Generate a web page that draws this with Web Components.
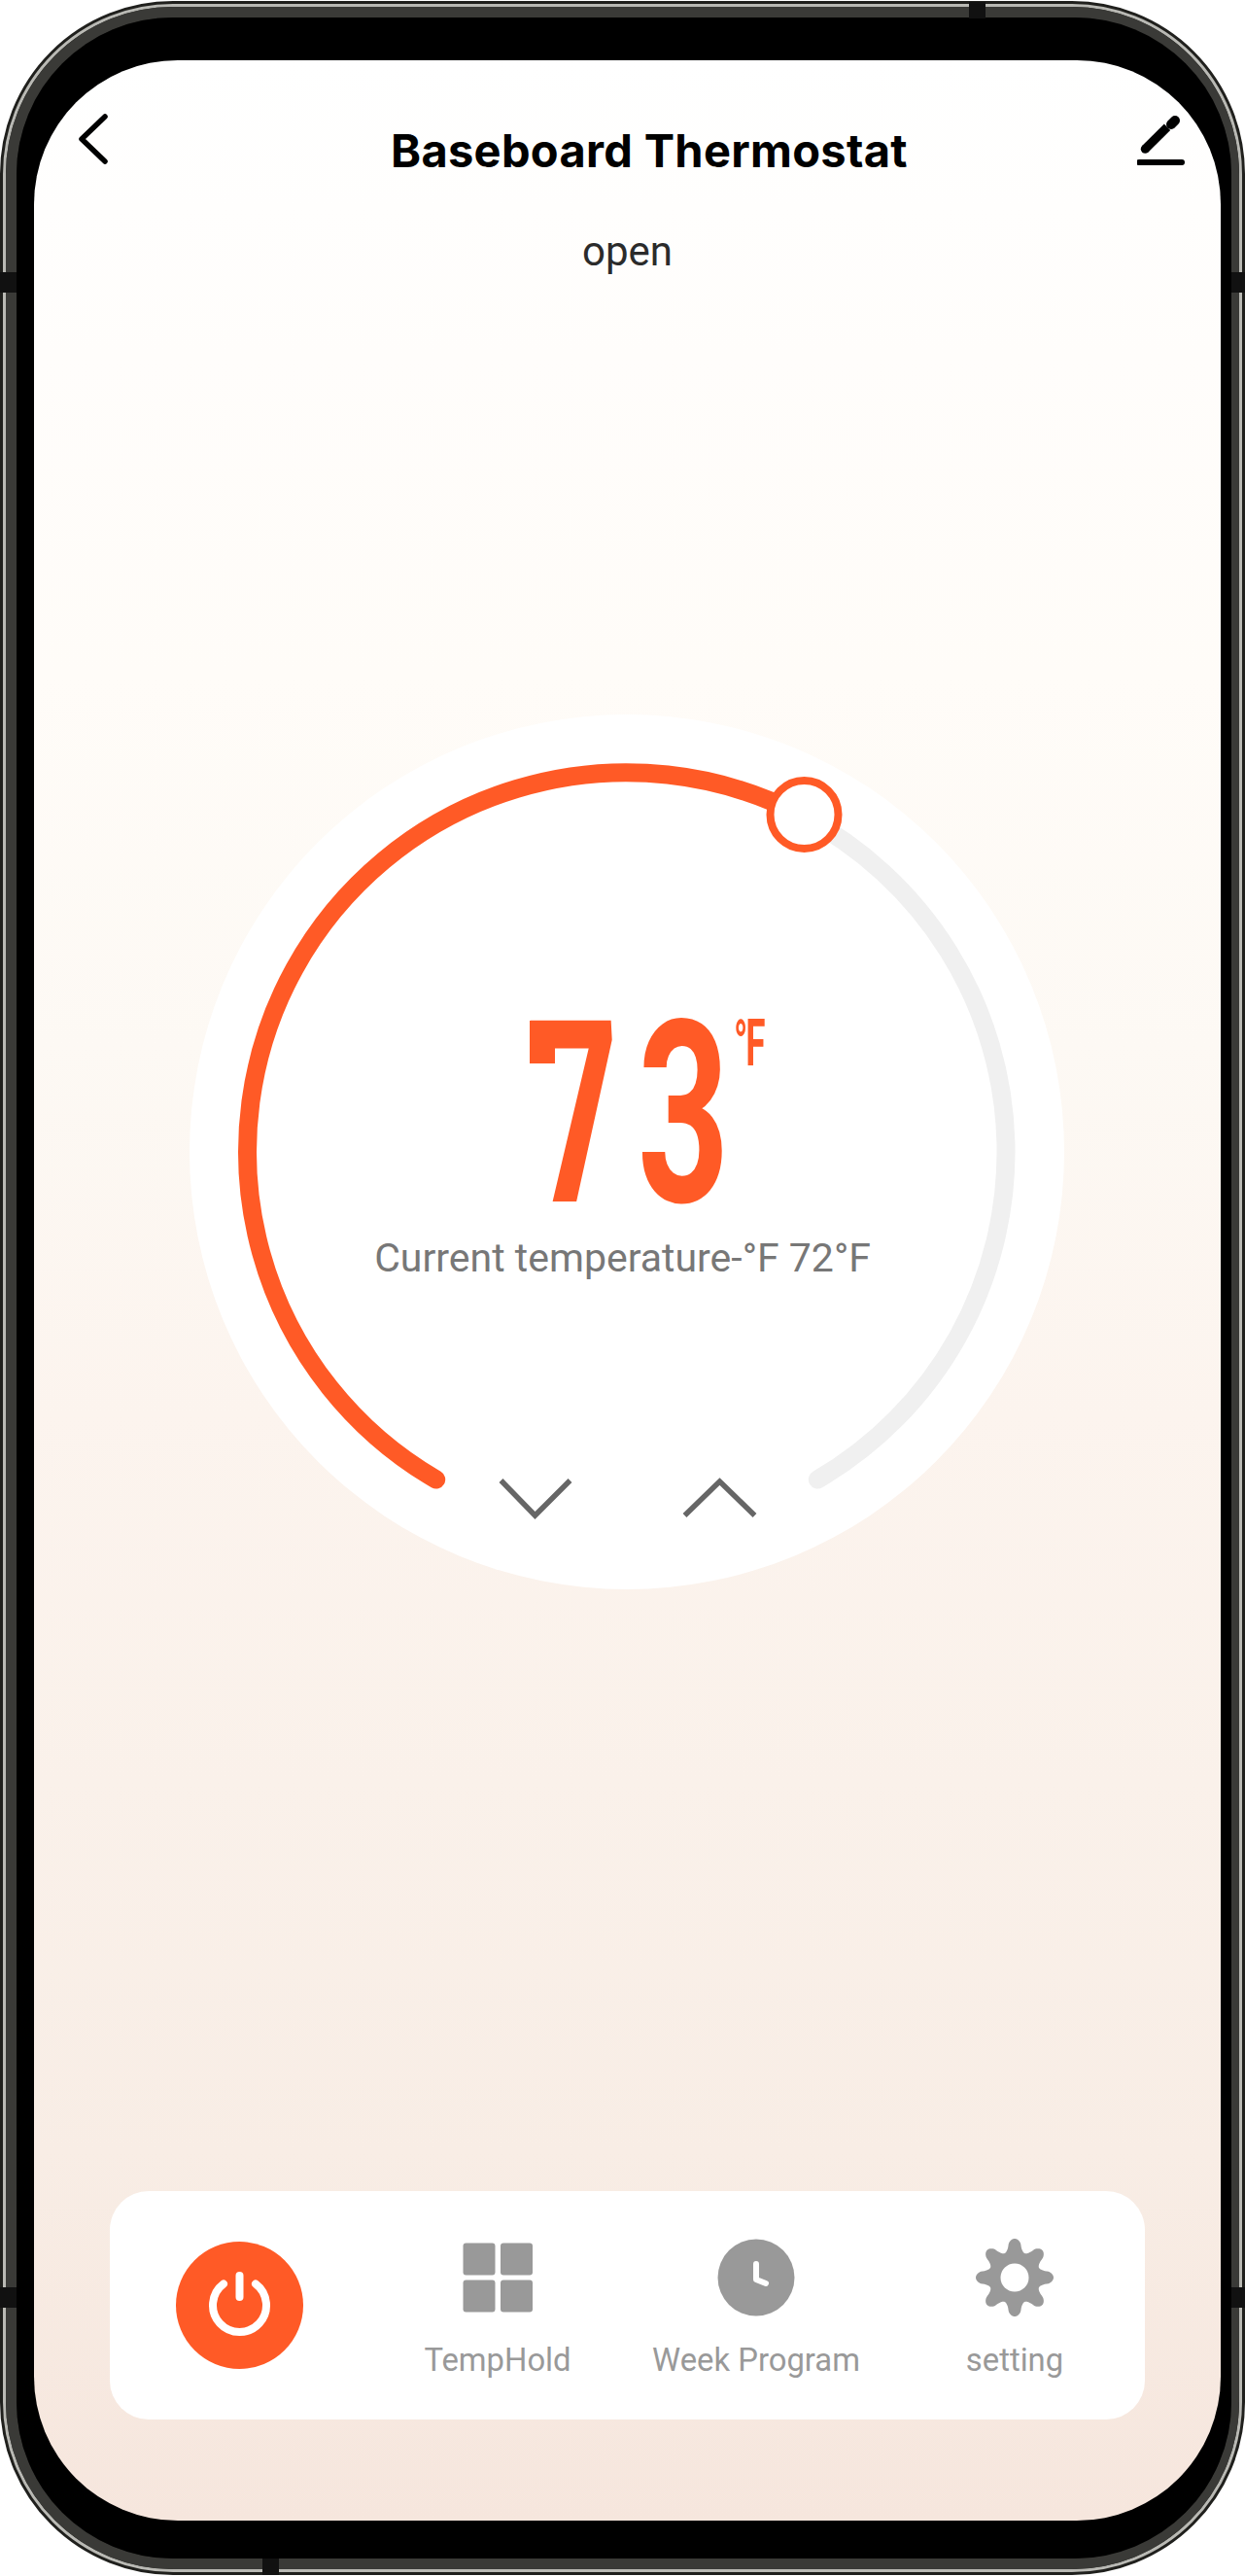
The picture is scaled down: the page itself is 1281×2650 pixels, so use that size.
<!DOCTYPE html>
<html>
<head>
<meta charset="utf-8">
<title>Baseboard Thermostat</title>
<style>
  html, body { margin: 0; background: #fff; }
  body { font-family: Roboto, "Liberation Sans", sans-serif; }
</style>
</head>
<body>
<phone-frame>
  <app-header title="Baseboard Thermostat" status="open"></app-header>
  <thermo-dial value="73" unit="°F" current="Current temperature-°F 72°F"></thermo-dial>
  <nav-bar>
    <power-button></power-button>
    <nav-item label="TempHold" icon="grid"></nav-item>
    <nav-item label="Week Program" icon="clock"></nav-item>
    <nav-item label="setting" icon="gear"></nav-item>
  </nav-bar>
</phone-frame>

<script>
class PhoneFrame extends HTMLElement {
  constructor() {
    super();
    this.attachShadow({ mode: 'open' });
    this.shadowRoot.innerHTML = `
      <style>
        :host { display: block; width: 1281px; height: 2650px; position: relative; }
        .edge { box-sizing: border-box; height: 2648px; margin-top: 1px; border: 3px solid #20201d; border-radius: 178px; background: #20201d; }
        .shine { box-sizing: border-box; height: 100%; border: 3px solid #b9b9b4; border-radius: 175px; }
        .band { box-sizing: border-box; height: 100%; border: 11px solid #3a3a37; border-right-width: 8px; border-radius: 172px; }
        .bezel { box-sizing: border-box; height: 100%; background: #000; border-radius: 161px; padding: 44px 11px 39px 18px; }
        .screen {
          height: 100%; border-radius: 148px; overflow: hidden;
          display: flex; flex-direction: column;
          background: linear-gradient(180deg, #ffffff 0%, #fffdfb 12%, #fffcf8 25%, #fdf9f4 40%, #fcf4ee 55%, #faf1ea 70%, #f8ede5 85%, #f6e6dd 100%);
        }
        /* antenna bands lie over the frame edge */
        i { position: absolute; background: #111; }
        .l { left: 0; width: 17px; height: 21px; }
        .r { right: 0; width: 14px; height: 21px; }
        .t { top: 1px; left: 997px; width: 17px; height: 17px; }
        .b { top: 2631px; left: 270px; width: 17px; height: 17px; }
      </style>
      <div class="edge"><div class="shine"><div class="band"><div class="bezel">
        <div class="screen"><slot></slot></div>
      </div></div></div></div>
      <i class="l" style="top:279px"></i><i class="l" style="top:2352px"></i>
      <i class="r" style="top:279px"></i><i class="r" style="top:2352px"></i>
      <i class="t"></i><i class="b"></i>
    `;
  }
}

class AppHeader extends HTMLElement {
  constructor() {
    super();
    this.attachShadow({ mode: 'open' });
  }

  connectedCallback() {
    const title = this.getAttribute('title');
    const status = this.getAttribute('status');
    this.shadowRoot.innerHTML = `
      <style>
        :host { display: block; color: #000; }
        .bar { display: flex; align-items: flex-start; height: 125px; padding: 0 34px 0 46px; }
        svg { display: block; flex: none; margin-top: 54px; }
        svg.edit { margin-left: auto; }
        h1 { margin: 64px 0 0 291px; font: 700 47px/58px Inter, Roboto, sans-serif; letter-spacing: .3px; white-space: nowrap; }
        p { margin: 46px 0 0; text-align: center; font: 400 42px/52px Roboto, sans-serif; color: #2b2b2b; }
      </style>
      <div class="bar">
        <svg width="30" height="54" viewBox="0 0 30 54" fill="none" stroke="#000" stroke-width="5.5" stroke-linecap="round" stroke-linejoin="round"><path d="M27 4 3 27l24 23"/></svg>
        <h1>${title}</h1>
        <svg class="edit" width="52" height="58" viewBox="0 0 52 58" fill="none" stroke="#000">
          <path d="M8.3 37.3 31 14.7" stroke-width="9"/><circle cx="8.3" cy="37.3" r="4.5" fill="#000" stroke="none"/>
          <path d="M35 12 39 8" stroke-width="10" stroke-linecap="round"/>
          <path d="M2 51H46" stroke-width="6" stroke-linecap="round"/>
        </svg>
      </div>
      <p>${status}</p>
    `;
  }
}

class ThermoDial extends HTMLElement {
  constructor() {
    super();
    this.attachShadow({ mode: 'open' });
  }

  connectedCallback() {
    const value = this.getAttribute('value');
    const unit = this.getAttribute('unit');
    const current = this.getAttribute('current');
    this.shadowRoot.innerHTML = `
      <style>
        :host { display: grid; justify-content: center; margin: 450px 2px 0 0; }
        .dial { display: grid; width: 900px; height: 900px; border-radius: 50%; background: #fff; }
        svg, .read { grid-area: 1 / 1; }
        svg { display: block; }
        .read { display: flex; flex-direction: column; align-items: center; color: #ff5a26; }
        .num { position: relative; align-self: flex-start; height: 190px; width: 250px; margin: 317px 0 0 350px; }
        .digits { display: block; font: 700 262px/190px Roboto, sans-serif; white-space: nowrap; transform: scaleX(.63); transform-origin: 0 0; margin-left: -4px; }
        .digits b { display: inline-block; font-weight: inherit; letter-spacing: 32px; transform: skewX(4.8deg); transform-origin: 0 0; }
        .tick { position: absolute; left: 0; top: -2px; width: 26px; height: 44px; background: #ff5a26; }
        .unit { position: absolute; left: 210px; top: -9px; font: 700 67px/60px Roboto, sans-serif; letter-spacing: -4px; white-space: nowrap; transform: scaleX(.55); transform-origin: 0 0; }
        .cur { margin: 27px 8px 0 0; font: 400 41px/50px Roboto, sans-serif; color: #777; white-space: nowrap; }
      </style>
      <div class="dial">
        <svg width="900" height="900" viewBox="-450 -450 900 900" fill="none" stroke-linecap="round">
          <path d="M196.3 337A390 390 0 0 0 180 -346" stroke="#f0f0f0" stroke-width="19"/>
          <path d="M-196.3 337A390 390 0 0 1 180 -346" stroke="#ff5a26" stroke-width="19"/>
          <circle cx="182.5" cy="-347" r="35" fill="#fff" stroke="#ff5a26" stroke-width="8"/>
          <path d="M-129.5 338-94.5 374-58.5 338M59.5 374 95.5 339 131.5 374" stroke="#666" stroke-width="5.5" stroke-linecap="butt"/>
        </svg>
        <div class="read">
          <div class="num"><span class="digits"><b>${value.slice(0, -1)}</b>${value.slice(-1)}</span><span class="tick"></span><span class="unit">${unit}</span></div>
          <div class="cur">${current}</div>
        </div>
      </div>
    `;
  }
}

class NavBar extends HTMLElement {
  constructor() {
    super();
    this.attachShadow({ mode: 'open' });
    this.shadowRoot.innerHTML = `
      <style>
        :host { display: block; margin: auto 78px 104px; }
        .bar { height: 235px; border-radius: 40px; background: #fff; display: grid; grid-template-columns: 266px 266px 266px 266px; }
      </style>
      <div class="bar"><slot></slot></div>
    `;
  }
}

class PowerButton extends HTMLElement {
  constructor() {
    super();
    this.attachShadow({ mode: 'open' });
    this.shadowRoot.innerHTML = `
      <style>
        :host { display: block; padding: 52px 0 0 68px; }
        svg { display: block; }
      </style>
      <svg width="131" height="131" viewBox="0 0 131 131">
        <circle cx="65.5" cy="65.5" r="65.5" fill="#ff5a26"/>
        <path d="M49 43.5A27.5 27.5 0 1 0 82 43.5" fill="none" stroke="#fff" stroke-width="8" stroke-linecap="round"/>
        <path d="M65.5 35V57" fill="none" stroke="#fff" stroke-width="8" stroke-linecap="round"/>
      </svg>
    `;
  }
}

class NavItem extends HTMLElement {
  constructor() {
    super();
    this.attachShadow({ mode: 'open' });
  }

  gearPoints() {
    // engranaje de 8 dientes
    const pts = [];
    for (let i = 0; i < 320; i++) {
      const a = i / 320 * Math.PI * 2;
      const c = Math.cos(8 * a);
      const r = 33.5 + 6.5 * Math.sign(c) * Math.pow(Math.abs(c), 0.7);
      pts.push((40 + r * Math.sin(a)).toFixed(2) + ',' + (40 - r * Math.cos(a)).toFixed(2));
    }
    return pts.join(' ');
  }

  iconMarkup(name) {
    if (name === 'grid') {
      return `<rect x="4.5" y="4.5" width="33" height="33" rx="3"/><rect x="43" y="4.5" width="33" height="33" rx="3"/><rect x="4.5" y="42.5" width="33" height="33" rx="3"/><rect x="43" y="42.5" width="33" height="33" rx="3"/>`;
    }
    if (name === 'clock') {
      return `<circle cx="40" cy="40" r="39.5"/><path d="M40 26V42L50 46" fill="none" stroke="#fff" stroke-width="6" stroke-linecap="round" stroke-linejoin="round"/>`;
    }
    return `<polygon points="${this.gearPoints()}"/><circle cx="40" cy="40" r="14.5" fill="#fff"/>`;
  }

  connectedCallback() {
    const label = this.getAttribute('label');
    const icon = this.getAttribute('icon');
    this.shadowRoot.innerHTML = `
      <style>
        :host { display: flex; flex-direction: column; align-items: center; padding-top: 49px; color: #999; }
        svg { display: block; fill: #999; }
        span { margin-top: 25px; font: 400 32.8px/40px Roboto, sans-serif; white-space: nowrap; }
      </style>
      <svg width="80" height="80" viewBox="0 0 80 80">${this.iconMarkup(icon)}</svg>
      <span>${label}</span>
    `;
  }
}

customElements.define('phone-frame', PhoneFrame);
customElements.define('app-header', AppHeader);
customElements.define('thermo-dial', ThermoDial);
customElements.define('nav-bar', NavBar);
customElements.define('power-button', PowerButton);
customElements.define('nav-item', NavItem);
</script>
</body>
</html>
